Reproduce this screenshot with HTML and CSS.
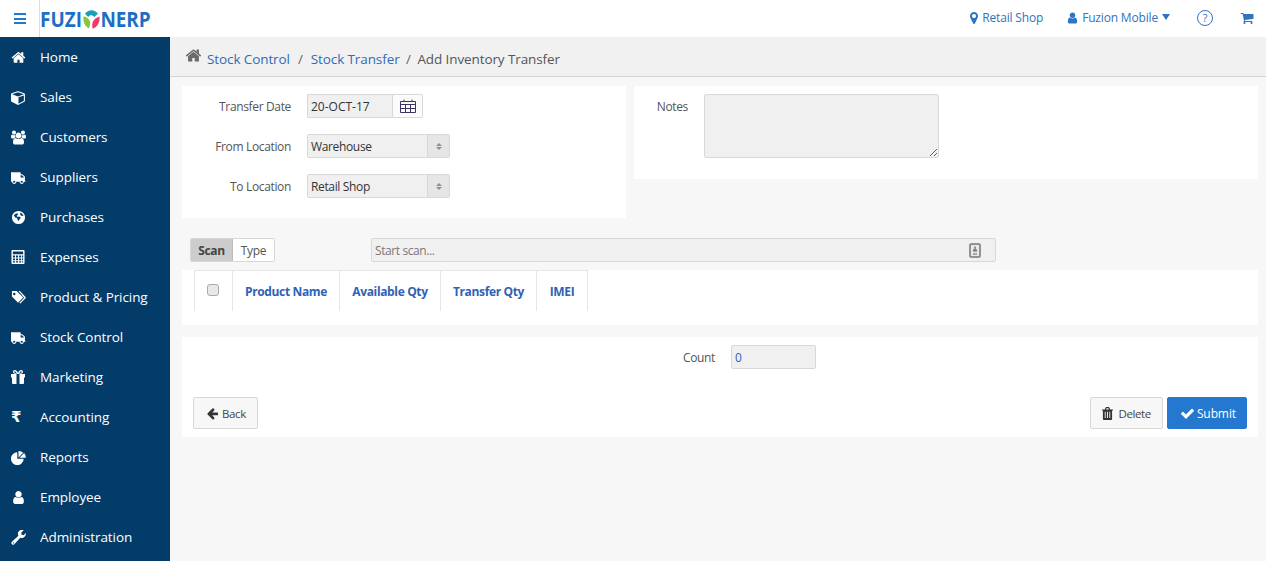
FILE: index.html
```html
<!DOCTYPE html>
<html lang="en">
<head>
<meta charset="utf-8">
<title>Add Inventory Transfer</title>
<link rel="stylesheet" href="styles.css">
</head>
<body>
<svg class="defs" width="0" height="0" aria-hidden="true">
  <symbol id="i-home" viewBox="0 0 1792 1792"><path d="M1472 992v480q0 26-19 45t-45 19h-384v-384h-256v384h-384q-26 0-45-19t-19-45v-480q0-1 .5-3t.5-3l575-474 575 474q1 2 1 6zm223-69l-62 74q-8 9-21 11h-3q-13 0-21-7l-692-577-692 577q-12 8-24 7-13-2-21-11l-62-74q-8-10-7-23.500t11-21.500l719-599q32-26 76-26t76 26l244 204v-195q0-14 9-23t23-9h192q14 0 23 9t9 23v408l219 182q10 8 11 21.500t-7 23.500z"/></symbol>
  <symbol id="i-cube" viewBox="0 0 1792 1792"><path d="M896 1629l640-349v-636l-640 233v752zm-64-865l698-254-698-254-698 254zm832-252v768q0 35-18 65t-49 47l-704 384q-28 16-61 16t-61-16l-704-384q-31-17-49-47t-18-65v-768q0-40 23-73t61-47l704-256q22-8 44-8t44 8l704 256q38 14 61 47t23 73z"/></symbol>
  <symbol id="i-users" viewBox="0 0 1920 1792"><path d="M593 896q-162 5-265 128h-134q-82 0-138-40.500t-56-118.500q0-353 124-353 6 0 43.500 21t97.500 42.500 119 21.500q67 0 133-23-5 37-5 66 0 139 81 256zm1071 637q0 120-73 189.500t-194 69.500h-874q-121 0-194-69.500t-73-189.500q0-53 3.500-103.500t14-109 26.500-108.500 43-97.500 62-81 85.500-53.500 111.500-20q10 0 43 21.500t73 48 107 48 135 21.500 135-21.500 107-48 73-48 43-21.500q61 0 111.500 20t85.500 53.500 62 81 43 97.500 26.500 108.500 14 109 3.500 103.500zm-1024-1277q0 106-75 181t-181 75-181-75-75-181 75-181 181-75 181 75 75 181zm704 384q0 159-112.500 271.500t-271.500 112.500-271.500-112.500-112.500-271.500 112.500-271.500 271.500-112.500 271.500 112.500 112.500 271.500zm576 225q0 78-56 118.500t-138 40.500h-134q-103-123-265-128 81-117 81-256 0-29-5-66 66 23 133 23 59 0 119-21.500t97.500-42.500 43.500-21q124 0 124 353zm-128-609q0 106-75 181t-181 75-181-75-75-181 75-181 181-75 181 75 75 181z"/></symbol>
  <symbol id="i-truck" viewBox="0 0 1792 1792"><g transform="matrix(-1 0 0 1 1792 0)"><path d="M640 1408q0-52-38-90t-90-38-90 38-38 90 38 90 90 38 90-38 38-90zm-384-512h384v-256h-158q-13 0-22 9l-195 195q-9 9-9 22v30zm1280 512q0-52-38-90t-90-38-90 38-38 90 38 90 90 38 90-38 38-90zm256-1088v1024q0 15-4 26.500t-13.500 18.500-16.500 11.500-23.500 6-22.500 2-25.500 0-22.500-.5q0 106-75 181t-181 75-181-75-75-181h-384q0 106-75 181t-181 75-181-75-75-181h-64q-3 0-22.500.5t-25.500 0-22.500-2-23.500-6-16.500-11.500-13.500-18.500-4-26.500q0-26 19-45t45-19v-320q0-8-.5-35t0-38 2.500-34.500 6.500-37 14-30.500 22.500-30l198-198q19-19 50.500-32t58.500-13h160v-192q0-26 19-45t45-19h1024q26 0 45 19t19 45z"/></g></symbol>
  <symbol id="i-globe" viewBox="0 0 16 16"><path fill-rule="evenodd" d="M8 1a7 7 0 1 1 0 14A7 7 0 0 1 8 1zM3 5.500 4.500 8l2 .5.500 2 1 1.500.8-2 1.700-1.500-1.500-1.500-2 .5-1-1.500 1.500-1-.500-1.500-2 .5zm7-2.500-.5 1.500L11 6l2.300.5C13 5 11.500 3.500 10 3z"/></symbol>
  <symbol id="i-calc" viewBox="0 0 14 15"><path fill-rule="evenodd" d="M1 0h12a1 1 0 0 1 1 1v13a1 1 0 0 1-1 1H1a1 1 0 0 1-1-1V1a1 1 0 0 1 1-1zm.5 1.500v3h11v-3zm0 4.500v2h2.300V6zm3.300 0v2h2.300V6zm3.400 0v2h2.200V6zm3.100 0v2h1.200V6zM1.500 9v2h2.300V9zm3.300 0v2h2.300V9zm3.400 0v2h2.200V9zm3.100 0v2h1.200V9zM1.500 12v1.500h2.300V12zm3.300 0v1.500h2.300V12zm3.400 0v1.500h2.200V12zm3.100 0v1.500h1.200V12z"/></symbol>
  <symbol id="i-tags" viewBox="0 0 16 14"><path fill-rule="evenodd" d="M1 0h5l7 7-5.500 5.500L1 6zm2.500 2A1.300 1.300 0 1 0 3.500 4.600 1.300 1.300 0 0 0 3.500 2z"/><path d="M8 0h1.500l6 6.500a1 1 0 0 1 0 1.300L10 13.500l-1-1 5-5.300z"/></symbol>
  <symbol id="i-gift" viewBox="0 0 14 14"><path fill-rule="evenodd" d="M0 4h4.200C2.800 3.500 2 2.700 2 1.800 2 .8 2.800 0 3.800 0 5.200 0 6.400 1.400 7 2.900 7.600 1.400 8.800 0 10.200 0c1 0 1.800.8 1.800 1.800 0 .9-.8 1.700-2.200 2.200H14v3.500h-1V13a1 1 0 0 1-1 1H8.500V4h-3v10H2a1 1 0 0 1-1-1V7.500H0zM3.800 1.200c-.4 0-.6.300-.6.600 0 .7 1.300 1.800 2.600 2.100C5.500 2.700 4.700 1.200 3.800 1.200zm6.400 0c-.9 0-1.700 1.500-2 2.700 1.300-.3 2.600-1.400 2.600-2.100 0-.3-.2-.6-.6-.6z"/></symbol>
  <symbol id="i-pie" viewBox="0 0 16 16"><path d="M6.700 2.500v6.800h6.800a6.800 6.800 0 1 1-6.800-6.800z"/><path d="M8 8V1a7 7 0 0 1 5 2z"/><path d="M9 8.200l5-5a7 7 0 0 1 1.800 5z"/></symbol>
  <symbol id="i-user" viewBox="0 0 1792 1792"><path d="M1536 1399q0 109-62.500 187t-150.500 78h-854q-88 0-150.500-78t-62.500-187q0-85 8.500-160.500t31.500-152 58.500-131 94-89 134.500-34.500q131 128 313 128t313-128q76 0 134.500 34.500t94 89 58.500 131 31.500 152 8.500 160.500zm-256-887q0 159-112.500 271.500t-271.500 112.500-271.500-112.500-112.500-271.500 112.500-271.500 271.500-112.500 271.500 112.500 112.500 271.500z"/></symbol>
  <symbol id="i-wrench" viewBox="0 0 16 16"><path fill-rule="evenodd" d="M15.800 4.200c0 2.400-2 4.300-4.300 4.300-.6 0-1.100-.1-1.600-.3l-6.400 6.900c-.7.800-1.900.8-2.600.1-.7-.7-.7-1.900.1-2.600l6.900-6.400A4.300 4.300 0 0 1 13.600.3L10.900 3l.5 2 2 .5 2.200-2.200c.1.300.2.600.2.900zM2.700 13a.7.7 0 1 0 0 1.400.7.700 0 0 0 0-1.400z"/></symbol>
  <symbol id="i-marker" viewBox="0 0 1024 1792"><path d="M768 640q0-106-75-181t-181-75-181 75-75 181 75 181 181 75 181-75 75-181zm256 0q0 109-33 179l-364 774q-16 33-47.500 52t-67.500 19-67.500-19-46.500-52l-365-774q-33-70-33-179 0-212 150-362t362-150 362 150 150 362z"/></symbol>
  <symbol id="i-cart" viewBox="0 0 1792 1792"><path d="M704 1536q0 52-38 90t-90 38-90-38-38-90 38-90 90-38 90 38 38 90zm896 0q0 52-38 90t-90 38-90-38-38-90 38-90 90-38 90 38 38 90zm128-1088v512q0 24-16.500 42.500t-40.500 21.500l-1044 122q13 60 13 70 0 16-24 64h920q26 0 45 19t19 45-19 45-45 19h-1024q-26 0-45-19t-19-45q0-11 8-31.500t16-36 21.500-40 15.500-29.500l-177-823h-204q-26 0-45-19t-19-45 19-45 45-19h256q16 0 28.500 6.500t19.500 15.500 13 24.500 8 26 5.500 29.500 4.500 26h1201q26 0 45 19t19 45z"/></symbol>
  <symbol id="i-check" viewBox="0 0 1792 1792"><path d="M1671 566q0 40-28 68l-724 724-136 136q-28 28-68 28t-68-28l-136-136-362-362q-28-28-28-68t28-68l136-136q28-28 68-28t68 28l294 295 656-657q28-28 68-28t68 28l136 136q28 28 28 68z"/></symbol>
  <symbol id="i-back" viewBox="0 0 1792 1792"><path d="M1664 896v128q0 53-32.500 90.500t-84.500 37.500h-704l293 294q38 36 38 90t-38 90l-75 76q-37 37-90 37-52 0-91-37l-651-652q-37-37-37-90 0-52 37-91l651-650q38-38 91-38 52 0 90 38l75 74q38 38 38 91t-38 91l-293 293h704q52 0 84.500 37.500t32.500 90.500z"/></symbol>
  <symbol id="i-trash" viewBox="0 0 12 14"><path fill-rule="evenodd" d="M0 2.500h3L4 .5C4.100.2 4.400 0 4.700 0h2.600c.3 0 .6.200.7.500l1 2h3v1.200h-1V13a1 1 0 0 1-1 1H2a1 1 0 0 1-1-1V3.700H0zM4.300 2.500h3.400L7 1.200H5zM3 5v7h1V5zm2.500 0v7h1V5zM8 5v7h1V5z"/></symbol>
</svg>

<header class="topbar">
  <button class="burger" type="button" aria-label="Menu"><span></span><span></span><span></span></button>
  <a class="logo" href="#">FUZI<svg class="logo-mark" viewBox="0 0 20 20" aria-hidden="true">
      <path fill="#1a9fb4" d="M3 5.500A9 9 0 0 1 17 5.500L13 8.500C11 6.500 8 6.500 6.500 8.500z"/>
      <path fill="#8cc63f" d="M1.500 8c2.500 0 6 2 7 5 .5 2.500-.5 5-1.500 6.500A10 10 0 0 1 1.500 8z"/>
      <path fill="#f0386b" d="M18.500 8c-1 .5-5 1.500-7 5-1 2.500-1 4.500 0 6.800A10 10 0 0 0 18.500 8z"/>
    </svg>NERP</a>
  <nav class="top-links">
    <a class="top-link" href="#"><svg class="ic ic-marker"><use href="#i-marker"/></svg>Retail Shop</a>
    <a class="top-link" href="#"><svg class="ic ic-topuser"><use href="#i-user"/></svg>Fuzion Mobile<span class="caret"></span></a>
    <a class="help" href="#">?</a>
    <a class="cart" href="#" aria-label="Cart"><svg class="ic ic-cart"><use href="#i-cart"/></svg></a>
  </nav>
</header>

<div class="shell">
  <aside class="sidebar">
    <a class="nav-item" href="#"><svg class="ic"><use href="#i-home"/></svg>Home</a>
    <a class="nav-item" href="#"><svg class="ic"><use href="#i-cube"/></svg>Sales</a>
    <a class="nav-item" href="#"><svg class="ic"><use href="#i-users"/></svg>Customers</a>
    <a class="nav-item" href="#"><svg class="ic"><use href="#i-truck"/></svg>Suppliers</a>
    <a class="nav-item" href="#"><svg class="ic"><use href="#i-globe"/></svg>Purchases</a>
    <a class="nav-item" href="#"><svg class="ic ic-sm"><use href="#i-calc"/></svg>Expenses</a>
    <a class="nav-item" href="#"><svg class="ic"><use href="#i-tags"/></svg>Product &amp; Pricing</a>
    <a class="nav-item" href="#"><svg class="ic"><use href="#i-truck"/></svg>Stock Control</a>
    <a class="nav-item" href="#"><svg class="ic ic-sm"><use href="#i-gift"/></svg>Marketing</a>
    <a class="nav-item" href="#"><span class="rupee">₹</span>Accounting</a>
    <a class="nav-item" href="#"><svg class="ic"><use href="#i-pie"/></svg>Reports</a>
    <a class="nav-item" href="#"><svg class="ic"><use href="#i-user"/></svg>Employee</a>
    <a class="nav-item" href="#"><svg class="ic"><use href="#i-wrench"/></svg>Administration</a>
  </aside>

  <main class="main">
    <div class="breadcrumb">
      <svg class="ic crumb-home"><use href="#i-home"/></svg>
      <a href="#">Stock Control</a><span class="sep sep-first">/</span><a href="#">Stock Transfer</a><span class="sep sep-last">/</span><span class="current">Add Inventory Transfer</span>
    </div>

    <div class="content">
      <div class="top-grid">
        <section class="panel form-panel">
          <div class="field">
            <label class="label">Transfer Date</label>
            <div class="date-group">
              <input class="input date-input" type="text" value="20-OCT-17" readonly>
              <span class="date-btn">
                <svg class="cal" viewBox="0 0 16 14" aria-hidden="true"><path d="M.5 2.500h15v11H.5zM.5 5.500h15M.5 9.500h15M5.500 5.500v8M10.500 5.500v8M4 .5v2M12 .5v2"/></svg>
              </span>
            </div>
          </div>
          <div class="field">
            <label class="label">From Location</label>
            <div class="select"><span class="select-value">Warehouse</span><span class="select-arrow"><i class="up"></i><i class="down"></i></span></div>
          </div>
          <div class="field">
            <label class="label">To Location</label>
            <div class="select"><span class="select-value">Retail Shop</span><span class="select-arrow"><i class="up"></i><i class="down"></i></span></div>
          </div>
        </section>
        <section class="panel notes-panel">
          <label class="label notes-label">Notes</label>
          <textarea class="input notes" readonly></textarea>
        </section>
      </div>

      <div class="scan-row">
        <div class="toggle"><span class="toggle-on">Scan</span><span class="toggle-off">Type</span></div>
        <div class="scan-box">
          <span class="scan-text">Start scan...</span>
          <svg class="scan-ic" viewBox="0 0 12 15" aria-hidden="true"><rect x="1" y="1" width="10" height="13" rx="1" fill="#e8e8e8" stroke="#777" stroke-width="1.500"/><path d="M5.300 3.500h1.400v3H8v2H4v-2h1.300z" fill="#777"/><path d="M4 10h4v2H4z" fill="#aaa"/></svg>
        </div>
      </div>

      <section class="panel table-panel">
        <table class="grid">
          <thead>
            <tr>
              <th class="col-check"><input class="check" type="checkbox"></th>
              <th class="col-name">Product Name</th>
              <th class="col-avail">Available Qty</th>
              <th class="col-transfer">Transfer Qty</th>
              <th class="col-imei">IMEI</th>
            </tr>
          </thead>
        </table>
      </section>

      <section class="panel footer-panel">
        <div class="count-row">
          <label class="label count-label">Count</label>
          <input class="input count" type="text" value="0" readonly>
        </div>
        <div class="actions">
          <a class="btn btn-back" href="#"><svg class="ic btn-ic"><use href="#i-back"/></svg>Back</a>
          <div class="actions-right">
            <a class="btn btn-delete" href="#"><svg class="ic btn-ic"><use href="#i-trash"/></svg>Delete</a>
            <a class="btn btn-primary" href="#"><svg class="ic btn-ic"><use href="#i-check"/></svg>Submit</a>
          </div>
        </div>
      </section>
    </div>
  </main>
</div>
</body>
</html>
```

FILE: styles.css
```css
* { box-sizing: border-box; }
html, body { margin: 0; height: 100%; }
body {
  font-family: "Open Sans", "Noto Sans", "Liberation Sans", sans-serif;
  font-size: 12px;
  color: #333;
  background: #f7f7f7;
  overflow: hidden;
}
a { text-decoration: none; color: inherit; }
.defs { position: absolute; }
.ic { width: 15px; height: 15px; fill: currentColor; flex: none; }

/* top bar */
.topbar {
  height: 37px;
  background: #fff;
  display: flex;
  align-items: center;
}
.burger {
  width: 40px;
  height: 37px;
  padding: 0 13px 0 14px;
  background: none;
  border: 0;
  border-right: 1px solid #ddd;
  display: flex;
  flex-direction: column;
  justify-content: center;
  gap: 2.500px;
}
.burger span { display: block; height: 2px; background: #2477ce; }
.logo {
  font-weight: 700;
  font-size: 21.500px;
  color: #1c6fc4;
  display: flex;
  align-items: center;
  transform: scaleX(.88);
  transform-origin: left center;
}
.logo-mark { width: 21px; height: 21px; }
.top-links {
  margin-left: auto;
  display: flex;
  align-items: center;
  color: #2f74c0;
  padding-bottom: 2px;
  letter-spacing: -.17px;
}
.top-link { display: flex; align-items: center; }
.ic-marker { width: 8px; height: 14px; margin-right: 4px; }
.ic-topuser { width: 13px; height: 14px; margin: 0 3px 0 23px; }
.caret {
  width: 0; height: 0;
  border-left: 4.500px solid transparent;
  border-right: 4.500px solid transparent;
  border-top: 6px solid #2f74c0;
  margin: 0 0 2px 4px;
}
.help {
  width: 16px; height: 16px;
  margin-left: 27px;
  border: 1px solid #2f74c0;
  border-radius: 50%;
  font-size: 11px;
  line-height: 14px;
  text-align: center;
}
.cart { margin: 0 12px 0 27px; display: flex; }
.ic-cart { width: 14px; height: 14px; }

/* shell */
.shell { display: flex; height: 524px; }
.sidebar {
  width: 170px;
  flex: none;
  background: #033b69;
}
.nav-item {
  height: 40px;
  display: flex;
  align-items: center;
  padding-left: 11px;
  color: #fff;
  font-size: 13.500px;
  letter-spacing: -.08px;
}
.nav-item .ic { margin-right: 14px; width: 15px; height: 15px; }
.nav-item .ic-sm { width: 14px; height: 14px; margin-right: 15px; }
.rupee {
  width: 15px;
  margin-right: 14px;
  font-family: "DejaVu Sans", sans-serif;
  font-weight: 700;
  font-size: 15px;
}

/* main */
.main { flex: 1; min-width: 0; display: flex; flex-direction: column; }
.breadcrumb {
  height: 40px;
  background: #f1f1f1;
  border-bottom: 1px solid #d4d4d4;
  display: flex;
  align-items: center;
  padding: 4px 0 0 15px;
  font-size: 13.500px;
  color: #2f6db5;
  letter-spacing: -.1px;
}
.crumb-home { width: 17px; height: 17px; color: #6b6b6b; margin: -7px 5px 0 0; }
.sep { color: #666; }
.sep-first { margin: 0 8px; }
.sep-last { margin: 0 6.500px; }
.current { color: #555; }
.content { padding: 9px 8px 0 12px; flex: 1; }

.panel { background: #fff; }
.top-grid { display: grid; grid-template-columns: 444px 624px; gap: 8px; align-items: start; }
.form-panel { height: 132px; padding-top: 8px; }
.field { display: flex; align-items: center; height: 24px; margin-bottom: 16px; }
.label { color: #555; font-size: 12px; text-align: right; letter-spacing: -.35px; }
.field .label { width: 109px; margin-right: 16px; }

.input {
  background: #f0f0f0;
  border: 1px solid #d8d8d8;
  border-radius: 2px;
  font: inherit;
  color: #333;
  padding: 0 3px;
  outline: none;
}
.date-group { display: flex; }
.date-input { width: 85px; height: 24px; border-radius: 2px 0 0 2px; border-right: 0; }
.date-btn {
  width: 31px; height: 24px;
  border: 1px solid #d8d8d8;
  border-radius: 0 2px 2px 0;
  background: #fbfbfb;
  display: flex;
  align-items: center;
  justify-content: center;
}
.cal { width: 16px; height: 14px; fill: none; stroke: #3a3560; stroke-width: 1; }

.select {
  width: 143px; height: 24px;
  display: flex;
  background: #f0f0f0;
  border: 1px solid #d8d8d8;
  border-radius: 2px;
}
.select-value { flex: 1; padding-left: 3px; line-height: 24px; letter-spacing: -.35px; }
.select-arrow {
  width: 22px;
  background: #e6e6e6;
  border-left: 1px solid #d8d8d8;
  display: flex;
  flex-direction: column;
  align-items: center;
  justify-content: center;
  gap: 1px;
}
.select-arrow i { width: 0; height: 0; border-left: 3px solid transparent; border-right: 3px solid transparent; }
.select-arrow .up { border-bottom: 3px solid #909090; }
.select-arrow .down { border-top: 3px solid #909090; }

.notes-panel { height: 93px; padding: 8px 0 0 0; display: flex; }
.notes-label { width: 54px; margin-right: 16px; padding-top: 4px; }
.notes { width: 235px; height: 64px; display: block; }

.scan-row { display: flex; align-items: center; margin-top: 20px; height: 24px; padding-left: 8px; }
.toggle { display: flex; width: 85px; height: 24px; border: 1px solid #d8d8d8; border-radius: 2px; background: #fff; letter-spacing: -.3px; }
.toggle-on { width: 42px; background: #ccc; font-weight: 700; text-align: center; line-height: 24px; border-right: 1px solid #bbb; color: #444; }
.toggle-off { flex: 1; text-align: center; line-height: 24px; color: #555; }
.scan-box {
  margin-left: 96px;
  width: 625px;
  height: 24px;
  background: #f0f0f0;
  border: 1px solid #d8d8d8;
  border-radius: 2px;
  display: flex;
  align-items: center;
  justify-content: space-between;
  padding: 0 14px 0 3px;
}
.scan-text { color: #777; letter-spacing: -.4px; padding-top: 1px; }
.scan-ic { width: 12px; height: 15px; }

.table-panel { height: 55px; margin-top: 8px; padding-left: 12px; }
.grid { border-collapse: collapse; height: 41px; }
.grid th {
  border: 1px solid #e6e6e6;
  border-bottom: 0;
  color: #2e62b5;
  font-size: 12px;
  font-weight: 700;
  padding: 0;
  letter-spacing: -.35px;
}
.col-check { width: 38px; }
.col-name { width: 107px; }
.col-avail { width: 101px; }
.col-transfer { width: 96px; }
.col-imei { width: 51px; }
.check {
  appearance: none;
  width: 12px; height: 12px;
  margin: 0 2px 4px 0;
  display: inline-block;
  vertical-align: middle;
  background: #e8e8e8;
  border: 1px solid #aaa;
  border-radius: 3px;
}

.footer-panel { height: 100px; margin-top: 12px; padding: 8px 11px; display: flex; flex-direction: column; justify-content: space-between; }
.count-row { display: flex; align-items: center; }
.count-label { width: 522px; margin-right: 16px; }
.count { width: 85px; height: 24px; color: #2e62b5; }
.actions { display: flex; justify-content: space-between; align-items: center; }
.actions-right { display: flex; gap: 4px; }
.btn {
  height: 32px;
  display: flex;
  align-items: center;
  background: #f7f7f7;
  border: 1px solid #d8d8d8;
  border-radius: 2px;
  color: #444;
  font-size: 11.500px;
  letter-spacing: -.4px;
}
.btn-ic { color: #333; }
.btn-back { padding: 0 11px 0 12px; }
.btn-back .btn-ic { width: 13px; height: 13px; margin-right: 3px; }
.btn-delete { padding: 0 11px; }
.btn-delete .btn-ic { width: 11px; height: 13px; margin-right: 6px; }
.btn-primary {
  padding: 0 10px 0 12px;
  background: #2478d0;
  border-color: #2478d0;
  color: #fff;
  font-size: 12px;
  letter-spacing: -.1px;
}
.btn-primary .btn-ic { color: #fff; width: 15px; height: 15px; margin-right: 2px; }
```
